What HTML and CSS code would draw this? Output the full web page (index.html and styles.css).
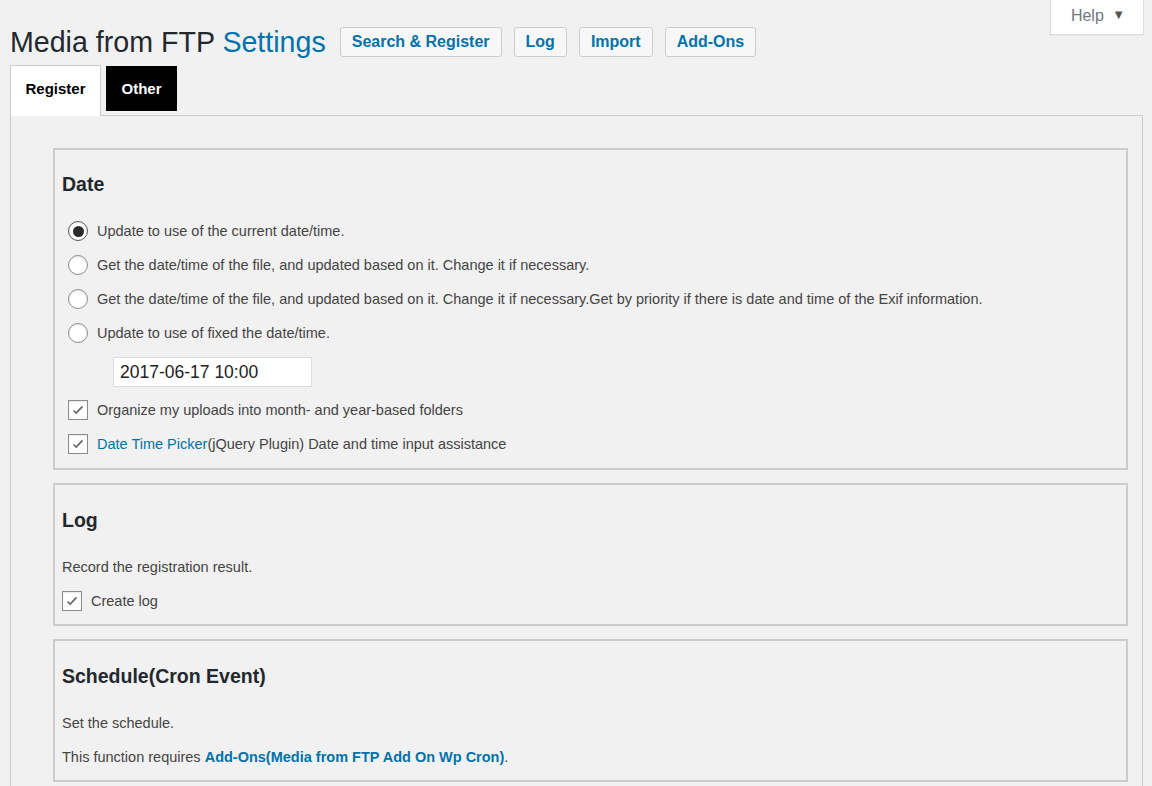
FILE: index.html
```html
<!DOCTYPE html>
<html lang="en">
<head>
    <meta charset="UTF-8">
    <title>Media from FTP Settings</title>
    <link rel="stylesheet" href="styles.css">
</head>
<body>
    <div class="screen-meta">
        <button class="help-tab">Help <span class="arrow">&#9660;</span></button>
    </div>

    <div class="wrap">
        <div class="title-row">
            <h1>Media from FTP <a href="#">Settings</a></h1>
            <a class="page-btn" href="#">Search &amp; Register</a>
            <a class="page-btn" href="#">Log</a>
            <a class="page-btn" href="#">Import</a>
            <a class="page-btn" href="#">Add-Ons</a>
        </div>

        <div class="tabs">
            <span class="tab active">Register</span>
            <span class="tab dark">Other</span>
        </div>

        <div class="panel">
            <!-- Date -->
            <div class="box box-date">
                <h2>Date</h2>
                <div class="options">
                    <label class="row"><span class="radio checked"></span>Update to use of the current date/time.</label>
                    <label class="row"><span class="radio"></span>Get the date/time of the file, and updated based on it. Change it if necessary.</label>
                    <label class="row"><span class="radio"></span>Get the date/time of the file, and updated based on it. Change it if necessary.Get by priority if there is date and time of the Exif information.</label>
                    <label class="row"><span class="radio"></span>Update to use of fixed the date/time.</label>
                    <div class="date-field"><input type="text" value="2017-06-17 10:00"></div>
                    <label class="row"><span class="check"><svg viewBox="0 0 20 20"><path d="M5 10.5l3 3 7-7.5" /></svg></span>Organize my uploads into month- and year-based folders</label>
                    <label class="row"><span class="check"><svg viewBox="0 0 20 20"><path d="M5 10.5l3 3 7-7.5" /></svg></span><a href="#">Date Time Picker</a>(jQuery Plugin) Date and time input assistance</label>
                </div>
            </div>

            <!-- Log -->
            <div class="box">
                <h2>Log</h2>
                <div class="row">Record the registration result.</div>
                <label class="row"><span class="check"><svg viewBox="0 0 20 20"><path d="M5 10.5l3 3 7-7.5" /></svg></span>Create log</label>
            </div>

            <!-- Schedule -->
            <div class="box">
                <h2>Schedule(Cron Event)</h2>
                <div class="row">Set the schedule.</div>
                <div class="row">This function requires&nbsp;<a class="strong" href="#">Add-Ons(Media from FTP Add On Wp Cron)</a>.</div>
            </div>
        </div>
    </div>
</body>
</html>
```

FILE: styles.css
```css
:root {
    --bg: #f1f1f1;
    --border: #cccccc;
    --link: #0073aa;
    --text: #444444;
    --heading: #23282d;
}

* {
    box-sizing: border-box;
}

body {
    margin: 0;
    background: var(--bg);
    color: var(--text);
    font-family: "Liberation Sans", Arial, sans-serif;
    font-size: 14.5px;
}

a {
    color: var(--link);
    text-decoration: none;
}

/* help tab */
.screen-meta {
    float: right;
    margin-right: 8px;
}

.help-tab {
    display: block;
    width: 94px;
    height: 35px;
    background: #fff;
    border: 1px solid #ddd;
    border-top: none;
    box-shadow: 0 1px 1px rgba(0, 0, 0, 0.04);
    color: #72777c;
    font-family: inherit;
    font-size: 16px;
    padding: 0 0 2px 2px;
}

.help-tab .arrow {
    font-size: 13px;
    margin-left: 4px;
    position: relative;
    top: -2px;
    color: #555;
}

/* header */
.wrap {
    padding: 27px 9px 0 10px;
}

.title-row {
    display: flex;
    align-items: center;
    gap: 12px;
    height: 30px;
}

h1 {
    margin: 0 2px 0 0;
    font-size: 28.6px;
    font-weight: 400;
    color: var(--heading);
    white-space: nowrap;
}

.page-btn {
    display: inline-block;
    height: 30px;
    line-height: 28px;
    padding: 0 11px;
    border: 1px solid var(--border);
    border-radius: 3px;
    background: #f7f7f7;
    font-weight: 700;
    font-size: 16px;
}

/* tabs */
.tabs {
    display: flex;
    align-items: flex-start;
    gap: 5px;
    margin-top: 8px;
    height: 50px;
}

.tab {
    display: flex;
    align-items: center;
    justify-content: center;
    font-weight: 700;
    font-size: 15px;
    color: #000;
}

.tab.active {
    width: 91px;
    height: 51px;
    padding-bottom: 5px;
    background: #fff;
    border: 1px solid var(--border);
    border-bottom: none;
    position: relative;
    z-index: 1;
}

.tab.dark {
    width: 71px;
    height: 45px;
    margin-top: 1px;
    background: #000;
    color: #fff;
}

/* settings panel */
.panel {
    border: 1px solid var(--border);
    border-bottom: none;
    padding: 32px 14px 4px 42px;
    display: flex;
    flex-direction: column;
    gap: 13px;
}

.box {
    border: 2px solid var(--border);
    padding: 0 7px 6px;
}

.box h2 {
    margin: 23px 0 18px;
    font-size: 19.5px;
    line-height: 24px;
    font-weight: 700;
    color: var(--heading);
}

.box-date {
    padding-bottom: 7px;
}

.box-date h2 {
    margin-top: 22px;
}

.options {
    padding-left: 6px;
}

.row {
    display: flex;
    align-items: center;
    height: 34px;
    white-space: nowrap;
}

.radio,
.check {
    flex: none;
    width: 20px;
    height: 20px;
    margin-right: 9px;
    border: 1px solid #8c8c8c;
    background: #fff;
    box-shadow: inset 0 1px 2px rgba(0, 0, 0, 0.1);
}

.radio {
    border-radius: 50%;
    display: flex;
    align-items: center;
    justify-content: center;
}

.radio.checked {
    border-color: #555;
}

.radio.checked::after {
    content: '';
    width: 11px;
    height: 11px;
    border-radius: 50%;
    background: #2a2a2a;
}

.check svg {
    display: block;
    width: 18px;
    height: 18px;
    fill: none;
    stroke: #666;
    stroke-width: 1.8;
}

.date-field {
    padding: 7px 0 6px 45px;
}

.date-field input {
    width: 199px;
    height: 30px;
    border: 1px solid #ddd;
    background: #fff;
    padding: 0 6px;
    font-family: inherit;
    font-size: 17.5px;
    color: #222;
}

a.strong {
    font-weight: 700;
}
```
